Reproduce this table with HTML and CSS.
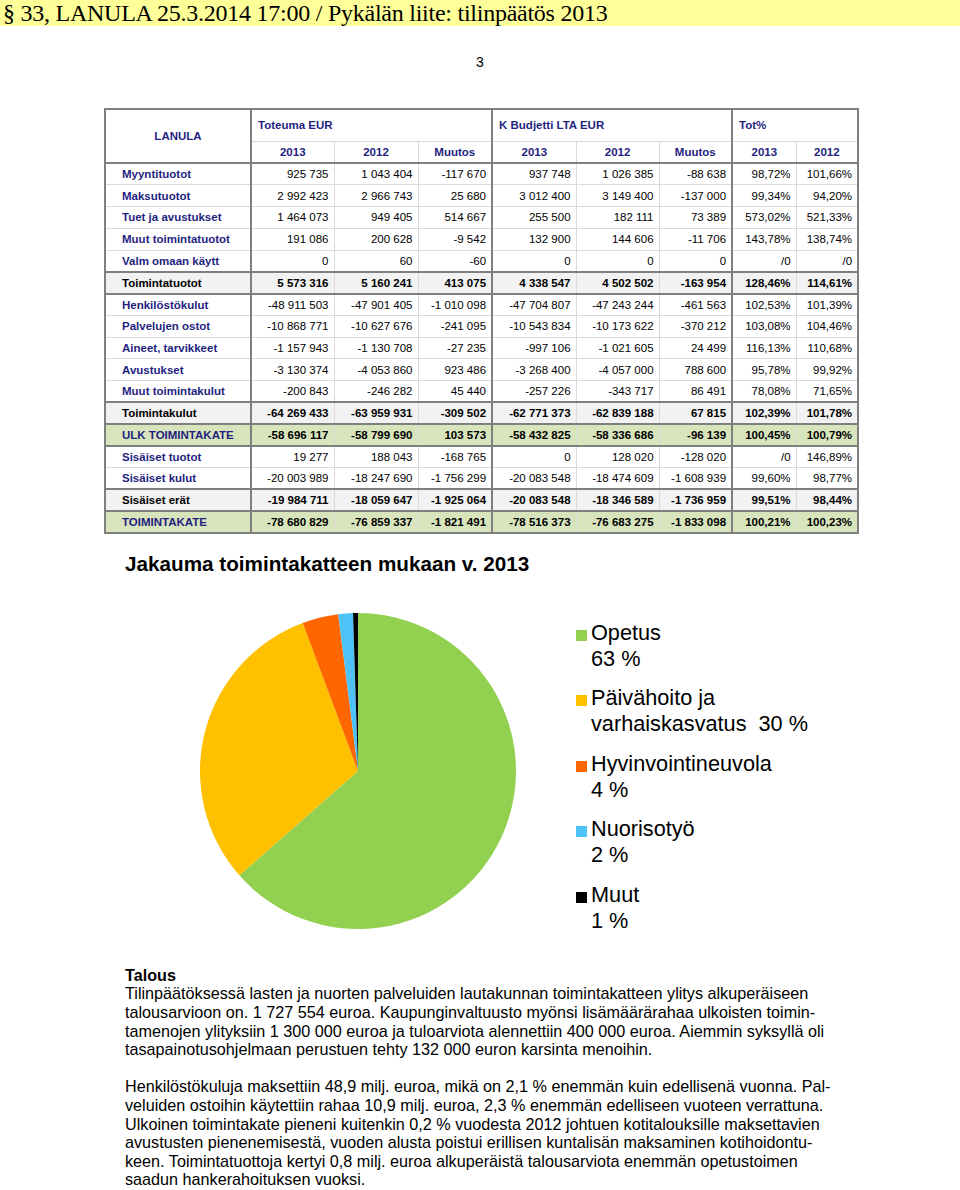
FILE: index.html
```html
<!DOCTYPE html>
<html lang="fi">
<head>
<meta charset="utf-8">
<title>LANULA tilinpäätös 2013</title>
<link rel="stylesheet" href="styles.css">
</head>
<body>
<div class="topbar">§ 33, LANULA 25.3.2014 17:00 / Pykälän liite: tilinpäätös 2013</div>
<div class="pagenum">3</div>

<div class="tablewrap">
<table class="fin">
<colgroup>
<col style="width:146px"><col style="width:83px"><col style="width:84px"><col style="width:74px"><col style="width:84px"><col style="width:83px"><col style="width:73px"><col style="width:64px"><col style="width:62px">
</colgroup>
<thead>
<tr class="h1">
<th rowspan="2" class="corner">LANULA</th>
<th colspan="3" class="grp gl">Toteuma EUR</th>
<th colspan="3" class="grp gl">K Budjetti LTA EUR</th>
<th colspan="2" class="grp gl">Tot%</th>
</tr>
<tr class="h2">
<th class="gl">2013</th><th>2012</th><th>Muutos</th>
<th class="gl">2013</th><th>2012</th><th>Muutos</th>
<th class="gl">2013</th><th>2012</th>
</tr>
</thead>
<tbody>
<tr><td class="lbl">Myyntituotot</td><td class="gl">925 735</td><td>1 043 404</td><td>-117 670</td><td class="gl">937 748</td><td>1 026 385</td><td>-88 638</td><td class="gl">98,72%</td><td>101,66%</td></tr>
<tr><td class="lbl">Maksutuotot</td><td class="gl">2 992 423</td><td>2 966 743</td><td>25 680</td><td class="gl">3 012 400</td><td>3 149 400</td><td>-137 000</td><td class="gl">99,34%</td><td>94,20%</td></tr>
<tr><td class="lbl">Tuet ja avustukset</td><td class="gl">1 464 073</td><td>949 405</td><td>514 667</td><td class="gl">255 500</td><td>182 111</td><td>73 389</td><td class="gl">573,02%</td><td>521,33%</td></tr>
<tr><td class="lbl">Muut toimintatuotot</td><td class="gl">191 086</td><td>200 628</td><td>-9 542</td><td class="gl">132 900</td><td>144 606</td><td>-11 706</td><td class="gl">143,78%</td><td>138,74%</td></tr>
<tr><td class="lbl">Valm omaan käytt</td><td class="gl">0</td><td>60</td><td>-60</td><td class="gl">0</td><td>0</td><td>0</td><td class="gl">/0</td><td>/0</td></tr>
<tr class="sum gray"><td class="lbl">Toimintatuotot</td><td class="gl">5 573 316</td><td>5 160 241</td><td>413 075</td><td class="gl">4 338 547</td><td>4 502 502</td><td>-163 954</td><td class="gl">128,46%</td><td>114,61%</td></tr>
<tr><td class="lbl">Henkilöstökulut</td><td class="gl">-48 911 503</td><td>-47 901 405</td><td>-1 010 098</td><td class="gl">-47 704 807</td><td>-47 243 244</td><td>-461 563</td><td class="gl">102,53%</td><td>101,39%</td></tr>
<tr><td class="lbl">Palvelujen ostot</td><td class="gl">-10 868 771</td><td>-10 627 676</td><td>-241 095</td><td class="gl">-10 543 834</td><td>-10 173 622</td><td>-370 212</td><td class="gl">103,08%</td><td>104,46%</td></tr>
<tr><td class="lbl">Aineet, tarvikkeet</td><td class="gl">-1 157 943</td><td>-1 130 708</td><td>-27 235</td><td class="gl">-997 106</td><td>-1 021 605</td><td>24 499</td><td class="gl">116,13%</td><td>110,68%</td></tr>
<tr><td class="lbl">Avustukset</td><td class="gl">-3 130 374</td><td>-4 053 860</td><td>923 486</td><td class="gl">-3 268 400</td><td>-4 057 000</td><td>788 600</td><td class="gl">95,78%</td><td>99,92%</td></tr>
<tr><td class="lbl">Muut toimintakulut</td><td class="gl">-200 843</td><td>-246 282</td><td>45 440</td><td class="gl">-257 226</td><td>-343 717</td><td>86 491</td><td class="gl">78,08%</td><td>71,65%</td></tr>
<tr class="sum gray"><td class="lbl">Toimintakulut</td><td class="gl">-64 269 433</td><td>-63 959 931</td><td>-309 502</td><td class="gl">-62 771 373</td><td>-62 839 188</td><td>67 815</td><td class="gl">102,39%</td><td>101,78%</td></tr>
<tr class="sum green"><td class="lbl">ULK TOIMINTAKATE</td><td class="gl">-58 696 117</td><td>-58 799 690</td><td>103 573</td><td class="gl">-58 432 825</td><td>-58 336 686</td><td>-96 139</td><td class="gl">100,45%</td><td>100,79%</td></tr>
<tr><td class="lbl">Sisäiset tuotot</td><td class="gl">19 277</td><td>188 043</td><td>-168 765</td><td class="gl">0</td><td>128 020</td><td>-128 020</td><td class="gl">/0</td><td>146,89%</td></tr>
<tr><td class="lbl">Sisäiset kulut</td><td class="gl">-20 003 989</td><td>-18 247 690</td><td>-1 756 299</td><td class="gl">-20 083 548</td><td>-18 474 609</td><td>-1 608 939</td><td class="gl">99,60%</td><td>98,77%</td></tr>
<tr class="sum gray"><td class="lbl">Sisäiset erät</td><td class="gl">-19 984 711</td><td>-18 059 647</td><td>-1 925 064</td><td class="gl">-20 083 548</td><td>-18 346 589</td><td>-1 736 959</td><td class="gl">99,51%</td><td>98,44%</td></tr>
<tr class="sum green"><td class="lbl">TOIMINTAKATE</td><td class="gl">-78 680 829</td><td>-76 859 337</td><td>-1 821 491</td><td class="gl">-78 516 373</td><td>-76 683 275</td><td>-1 833 098</td><td class="gl">100,21%</td><td>100,23%</td></tr>
</tbody>
</table>
</div>

<h2 class="charttitle">Jakauma toimintakatteen mukaan v. 2013</h2>

<div class="chart">
<svg class="pie" width="320" height="320" viewBox="0 0 320 320">
<path d="M160,160 L160,2 A158,158 0 1,1 41.3,264.3 Z" fill="#92d050"/>
<path d="M160,160 L41.3,264.3 A158,158 0 0,1 104.7,12 Z" fill="#ffc000"/>
<path d="M160,160 L104.7,12 A158,158 0 0,1 140.2,3.2 Z" fill="#ff6600"/>
<path d="M160,160 L140.2,3.2 A158,158 0 0,1 155,2.1 Z" fill="#4fc3f7"/>
<path d="M160,160 L155,2.1 A158,158 0 0,1 160,2 Z" fill="#000"/>
</svg>
<ul class="legend">
<li><span class="sw sw-green"></span><span class="lt">Opetus<br>63 %</span></li>
<li><span class="sw sw-yellow"></span><span class="lt">Päivähoito ja<br>varhaiskasvatus&nbsp; 30 %</span></li>
<li><span class="sw sw-orange"></span><span class="lt">Hyvinvointineuvola<br>4 %</span></li>
<li><span class="sw sw-blue"></span><span class="lt">Nuorisotyö<br>2 %</span></li>
<li><span class="sw sw-black"></span><span class="lt">Muut<br>1 %</span></li>
</ul>
</div>

<div class="text">
<p><b>Talous</b><br>Tilinpäätöksessä lasten ja nuorten palveluiden lautakunnan toimintakatteen ylitys alkuperäiseen<br>talousarvioon on. 1 727 554 euroa. Kaupunginvaltuusto myönsi lisämäärärahaa ulkoisten toimin-<br>tamenojen ylityksiin 1 300 000 euroa ja tuloarviota alennettiin 400 000 euroa. Aiemmin syksyllä oli<br>tasapainotusohjelmaan perustuen tehty 132 000 euron karsinta menoihin.</p>
<p>Henkilöstökuluja maksettiin 48,9 milj. euroa, mikä on 2,1 % enemmän kuin edellisenä vuonna. Pal-<br>veluiden ostoihin käytettiin rahaa 10,9 milj. euroa, 2,3 % enemmän edelliseen vuoteen verrattuna.<br>Ulkoinen toimintakate pieneni kuitenkin 0,2 % vuodesta 2012 johtuen kotitalouksille maksettavien<br>avustusten pienenemisestä, vuoden alusta poistui erillisen kuntalisän maksaminen kotihoidontu-<br>keen. Toimintatuottoja kertyi 0,8 milj. euroa alkuperäistä talousarviota enemmän opetustoimen<br>saadun hankerahoituksen vuoksi.</p>
</div>
</body>
</html>
```

FILE: styles.css
```css
* { box-sizing: border-box; }
html, body { margin: 0; padding: 0; background: #fff; }
body { width: 960px; height: 1190px; overflow: hidden; font-family: "Liberation Sans", Arial, sans-serif; color: #000; }

.topbar {
  height: 26px;
  background: #ffff99;
  font-family: "Liberation Serif", "Times New Roman", serif;
  font-size: 24px;
  letter-spacing: -0.25px;
  line-height: 27px;
  padding-left: 3px;
  white-space: nowrap;
  overflow: hidden;
}

.pagenum {
  text-align: center;
  font-size: 14px;
  line-height: 16px;
  margin-top: 28px;
  height: 54px;
}

.tablewrap { padding-left: 104px; }

.fin {
  border-collapse: collapse;
  table-layout: fixed;
  width: 753px;
  font-size: 11.5px;
  border: 2px solid #7f7f7f;
}
.fin th, .fin td {
  border: 1px solid #dadada;
  padding: 0 5px;
  white-space: nowrap;
  overflow: hidden;
}
.fin th { color: #1f1f7f; font-weight: bold; }
.fin .h1 { height: 32px; }
.fin .h2 { height: 22px; }
.fin .h2 th { text-align: center; border-bottom: 2px solid #7f7f7f; }
.fin .corner { text-align: center; border-bottom: 2px solid #7f7f7f; }
.fin .grp { text-align: left; padding-left: 6px; vertical-align: middle; }
.fin .gl { border-left: 2px solid #7f7f7f; }
.fin tbody tr { height: 21.75px; }
.fin td { text-align: right; }
.fin td.lbl { text-align: left; padding-left: 16px; color: #1f1f7f; font-weight: bold; }
.fin tr.sum td { font-weight: bold; border-top: 2px solid #7f7f7f; border-bottom: 2px solid #7f7f7f; }
.fin tr.gray td { background: #f2f2f2; }
.fin tr.gray td.lbl { color: #000; }
.fin tr.green td { background: #d8e4bc; }

.charttitle {
  margin: 18px 0 0 125px;
  font-size: 20.7px;
  line-height: 24px;
  font-weight: bold;
}

.chart {
  display: flex;
  align-items: flex-start;
  padding-left: 198px;
  margin-top: 35px;
  height: 345px;
}
.pie { display: block; flex: none; }
.legend {
  list-style: none;
  margin: 9px 0 0 58px;
  padding: 0;
  font-size: 21.7px;
  line-height: 26px;
}
.legend li { display: flex; align-items: flex-start; margin-bottom: 13.5px; }
.sw { width: 11px; height: 11px; margin: 10px 4px 0 0; flex: none; }
.sw-green { background: #92d050; }
.sw-yellow { background: #ffc000; }
.sw-orange { background: #ff6600; }
.sw-blue { background: #4fc3f7; }
.sw-black { background: #000; }
.lt { white-space: nowrap; }

.text {
  padding-left: 125px;
  margin-top: 10px;
  font-size: 16.2px;
  line-height: 18.6px;
}
.text p { margin: 0 0 18.6px; white-space: nowrap; }
```
